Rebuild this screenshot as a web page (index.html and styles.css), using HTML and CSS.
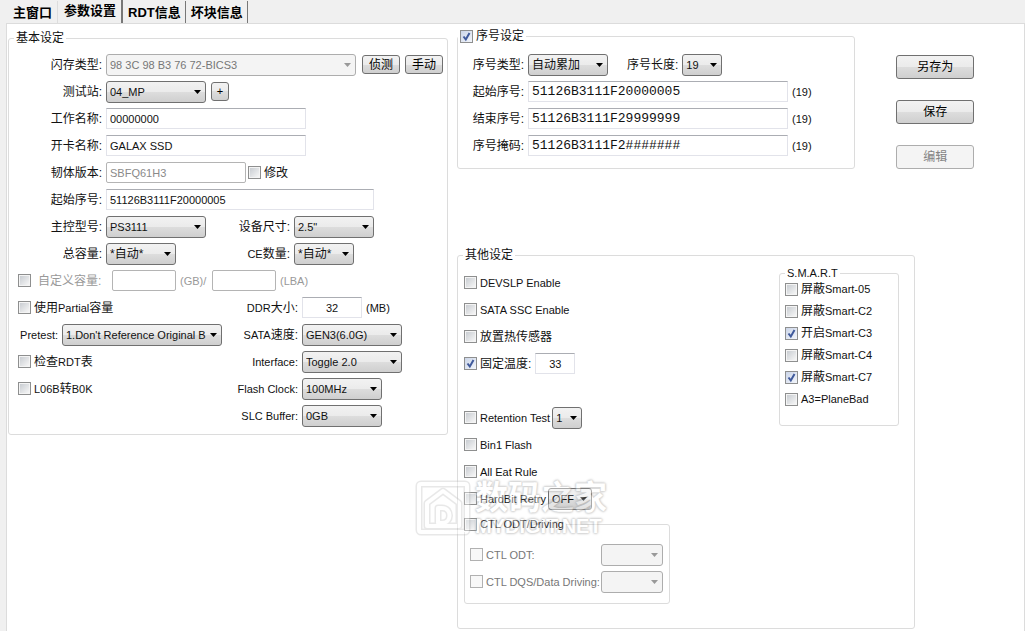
FILE: index.html
```html
<!DOCTYPE html>
<html lang="zh-CN">
<head>
<meta charset="utf-8">
<title>参数设置</title>
<link rel="stylesheet" href="styles.css">
</head>
<body>
<nav class="tabs" role="tablist">
  <button class="tab" role="tab" type="button">主窗口</button>
  <button class="tab tab-active" role="tab" type="button" aria-selected="true">参数设置</button>
  <button class="tab" role="tab" type="button">RDT信息</button>
  <button class="tab" role="tab" type="button">坏块信息</button>
</nav>
<main class="panel">
  <fieldset class="group basic">
    <legend class="zh">基本设定</legend>
    <div class="row"><label class="name zh" for="flash">闪存类型:</label>
      <select class="w250" id="flash" disabled><option>98 3C 98 B3 76 72-BICS3</option></select>
      <button class="btn btn-small after" type="button">侦测</button><button class="btn btn-small after" type="button">手动</button></div>
    <div class="row"><label class="name zh" for="station">测试站:</label>
      <select class="w100" id="station"><option>04_MP</option></select>
      <button class="btn btn-plus" type="button">+</button></div>
    <div class="row"><label class="name zh" for="work">工作名称:</label><input class="w200" id="work" type="text" value="00000000"></div>
    <div class="row"><label class="name zh" for="card">开卡名称:</label><input class="w200" id="card" type="text" value="GALAX SSD"></div>
    <div class="row"><label class="name zh" for="fw">韧体版本:</label><input class="w140" id="fw" type="text" value="SBFQ61H3" disabled>
      <label class="check zh fix"><input type="checkbox">修改</label></div>
    <div class="row"><label class="name zh" for="start">起始序号:</label><input class="w268" id="start" type="text" value="51126B3111F20000005"></div>
    <div class="row row-four"><label class="name zh" for="ctrl">主控型号:</label>
      <select class="w100" id="ctrl"><option>PS3111</option></select>
      <label class="name zh" for="size">设备尺寸:</label>
      <select class="w80" id="size"><option>2.5"</option></select></div>
    <div class="row row-four"><label class="name zh" for="cap">总容量:</label>
      <select class="w70 zh" id="cap"><option>*自动*</option></select>
      <label class="name" for="ce">CE<span class="zh">数量:</span></label>
      <select class="w60 zh" id="ce"><option>*自动*</option></select></div>
    <div class="row row-custom">
      <input type="checkbox" id="custom" disabled><label class="zh custom-name" for="custom">自定义容量:</label>
      <input class="w64" type="text" aria-label="GB" disabled><span class="unit">(GB)/</span>
      <input class="w64" type="text" aria-label="LBA" disabled><span class="unit">(LBA)</span></div>
    <div class="row row-pair"><label class="check indent"><input type="checkbox"><span><span class="zh">使用</span>Partial<span class="zh">容量</span></span></label>
      <label class="name" for="ddr">DDR<span class="zh">大小:</span></label>
      <div class="field"><input class="w60 center" id="ddr" type="text" value="32">(MB)</div></div>
    <div class="row row-pair"><div class="field field-end"><label for="pretest">Pretest:</label>
      <select class="w160" id="pretest"><option>1.Don't Reference Original B</option></select></div>
      <label class="name" for="sata">SATA<span class="zh">速度:</span></label>
      <select class="w100" id="sata"><option>GEN3(6.0G)</option></select></div>
    <div class="row row-pair"><label class="check indent"><input type="checkbox"><span><span class="zh">检查</span>RDT<span class="zh">表</span></span></label>
      <label class="name" for="iface">Interface:</label>
      <select class="w100" id="iface"><option>Toggle 2.0</option></select></div>
    <div class="row row-pair"><label class="check indent"><input type="checkbox"><span>L06B<span class="zh">转</span>B0K</span></label>
      <label class="name" for="clock">Flash Clock:</label>
      <select class="w80" id="clock"><option>100MHz</option></select></div>
    <div class="row row-pair"><span></span>
      <label class="name" for="slc">SLC Buffer:</label>
      <select class="w80" id="slc"><option>0GB</option></select></div>
  </fieldset>

  <div class="right">
    <div class="upper">
      <fieldset class="group serial">
        <legend class="legend-check"><label class="check zh"><input type="checkbox" checked>序号设定</label></legend>
        <div class="row"><label class="name zh" for="stype">序号类型:</label>
          <select class="w80 zh" id="stype"><option>自动累加</option></select>
          <label class="zh length-name" for="slen">序号长度:</label>
          <select class="w40" id="slen"><option>19</option></select></div>
        <div class="row"><label class="name zh" for="s1">起始序号:</label><input class="w260 mono" id="s1" type="text" value="51126B3111F20000005"><span>(19)</span></div>
        <div class="row"><label class="name zh" for="s2">结束序号:</label><input class="w260 mono" id="s2" type="text" value="51126B3111F29999999"><span>(19)</span></div>
        <div class="row"><label class="name zh" for="s3">序号掩码:</label><input class="w260 mono" id="s3" type="text" value="51126B3111F2#######"><span>(19)</span></div>
      </fieldset>
      <div class="actions">
        <button class="btn btn-large" type="button">另存为</button>
        <button class="btn btn-large" type="button">保存</button>
        <button class="btn btn-large" type="button" disabled>编辑</button>
      </div>
    </div>

    <fieldset class="group other">
      <legend class="zh">其他设定</legend>
      <div class="other-body">
        <div class="options">
          <div class="row"><label class="check"><input type="checkbox">DEVSLP Enable</label></div>
          <div class="row"><label class="check"><input type="checkbox">SATA SSC Enable</label></div>
          <div class="row"><label class="check zh"><input type="checkbox">放置热传感器</label></div>
          <div class="row"><label class="check zh"><input type="checkbox" checked>固定温度:</label><input class="w40 center" type="text" value="33" aria-label="固定温度"></div>
          <div class="row row-break"><label class="check"><input type="checkbox">Retention Test</label>
            <select class="w30 close" aria-label="Retention Test"><option>1</option></select></div>
          <div class="row"><label class="check"><input type="checkbox">Bin1 Flash</label></div>
          <div class="row"><label class="check"><input type="checkbox">All Eat Rule</label></div>
          <div class="row"><label class="check"><input type="checkbox">HardBit Retry</label>
            <select class="w44 close" aria-label="HardBit Retry"><option>OFF</option></select></div>
          <fieldset class="group ctl">
            <legend class="legend-check"><label class="check"><input type="checkbox">CTL ODT/Driving</label></legend>
            <div class="row"><label class="check muted"><input type="checkbox" disabled>CTL ODT:</label>
              <select class="w62" aria-label="CTL ODT" disabled><option></option></select></div>
            <div class="row"><label class="check muted"><input type="checkbox" disabled>CTL DQS/Data Driving:</label>
              <select class="w62" aria-label="CTL DQS/Data Driving" disabled><option></option></select></div>
          </fieldset>
        </div>
        <fieldset class="group smart">
          <legend>S.M.A.R.T</legend>
          <div class="smart-list">
            <label class="check"><input type="checkbox"><span><span class="zh">屏蔽</span>Smart-05</span></label>
            <label class="check"><input type="checkbox"><span><span class="zh">屏蔽</span>Smart-C2</span></label>
            <label class="check"><input type="checkbox" checked><span><span class="zh">开启</span>Smart-C3</span></label>
            <label class="check"><input type="checkbox"><span><span class="zh">屏蔽</span>Smart-C4</span></label>
            <label class="check"><input type="checkbox" checked><span><span class="zh">屏蔽</span>Smart-C7</span></label>
            <label class="check"><input type="checkbox">A3=PlaneBad</label>
          </div>
        </fieldset>
      </div>
      <div class="watermark">
        <svg width="56" height="56" viewBox="0 0 56 56" fill="none" stroke-linejoin="round">
          <g stroke="#c8c8c8" stroke-width="7">
            <rect x="4" y="4" width="48" height="48" rx="2"/>
            <path d="M12 46V23L28 11l16 12v23z"/>
            <path d="M23 28h4c10 0 10 15 0 15h-4z"/>
          </g>
          <g stroke="#fff" stroke-width="4">
            <rect x="4" y="4" width="48" height="48" rx="2"/>
            <path d="M12 46V23L28 11l16 12v23z"/>
            <path d="M23 28h4c10 0 10 15 0 15h-4z"/>
          </g>
        </svg>
        <div class="brand"><span class="brand-zh">数码之家</span><span class="brand-en">MYDIGIT.NET</span></div>
      </div>
    </fieldset>
  </div>
</main>
</body>
</html>
```
FILE: styles.css
```css
* { box-sizing: border-box; }

body {
  margin: 0;
  min-height: 100vh;
  display: flex;
  flex-direction: column;
  padding-left: 6px;
  background: #f0f0f0;
  color: #111;
  font: 11px/16px "Liberation Sans", "Noto Sans CJK SC", sans-serif;
  white-space: nowrap;
}

button, input, select { font: inherit; color: inherit; margin: 0; }
.zh { font-size: 12px; }

/* Tab strip */
.tabs { display: flex; height: 23px; align-items: flex-end; }
.tab {
  height: 22px;
  padding: 1px 4px 0 5px;
  border: 0;
  border-right: 1px solid #777;
  background: #f0f0f0;
  color: #000;
  font-size: 13px;
  font-weight: bold;
}
.tab:first-child { padding: 1px 5px 0 7px; border-right-color: #ddd; }
.tab-active {
  height: 23px;
  padding: 0 5px 1px 6px;
  border-right: 2px solid #777;
}

/* Page panel */
.panel {
  flex: 1;
  display: grid;
  grid-template-columns: minmax(440px, 440fr) minmax(518px, 568fr);
  gap: 9px;
  align-items: start;
  padding: 4px 0 2px 1px;
  border: 1px solid #dcdcdc;
  border-bottom: 0;
  background: #fff;
}

.group {
  min-width: 0;
  margin: 0;
  padding: 0;
  border: 1px solid #dcdcdc;
  border-radius: 3px;
}
legend { height: 16px; margin-left: 5px; padding: 0 2px; }
.legend-check { margin-left: 0; }

.row { display: flex; align-items: center; gap: 4px; height: 27px; }
.name { text-align: right; }
.row > .name:first-child { flex: 0 0 auto; }

.basic { margin-top: 2px; padding: 5px 0; }
.basic .row > .name:first-child { width: 93px; }
.after { margin-left: 2px; }
.fix { margin-left: -2px; }
.basic .row-four { display: grid; grid-template-columns: 93px 100px 80px auto; }
.basic .row-pair { display: grid; grid-template-columns: 213px 72px auto; }
.row-four, .row-pair { justify-content: start; }
.indent { padding-left: 9px; }
.field { display: flex; align-items: center; gap: 4px; }
.field-end { justify-content: flex-end; }
.row-custom { padding-left: 9px; color: #999; }
.custom-name { width: 73px; padding-left: 3px; }
.unit { width: 28px; }

/* Text boxes */
input[type="text"] {
  height: 21px;
  padding: 0 3px;
  border: 1px solid #e2e3ea;
  border-top-color: #abadb3;
  background: #fff;
}
input[type="text"]:disabled { border-color: #b4b4b4; border-radius: 2px; color: #8a8a8a; }
input.center { text-align: center; }
input.mono { font: 13px/16px "Liberation Mono", monospace; }

/* Drop-downs */
select {
  appearance: none;
  flex: none;
  height: 22px;
  padding: 0 14px 0 3px;
  border: 1px solid #707070;
  border-radius: 3px;
  background:
    url("data:image/svg+xml,%3Csvg xmlns='http://www.w3.org/2000/svg' width='7' height='4'%3E%3Cpath d='M0 0h7L3.5 4z' fill='%23000'/%3E%3C/svg%3E") no-repeat right 4px center,
    linear-gradient(#f2f2f2, #ebebeb 50%, #dddddd 50%, #cfcfcf);
}
select:disabled {
  border-color: #adadad;
  background:
    url("data:image/svg+xml,%3Csvg xmlns='http://www.w3.org/2000/svg' width='7' height='4'%3E%3Cpath d='M0 0h7L3.5 4z' fill='%23999'/%3E%3C/svg%3E") no-repeat right 4px center,
    #f4f4f4;
  color: #777;
  opacity: 1;
}

/* Tick boxes */
.check { display: inline-flex; align-items: center; gap: 3px; }
input[type="checkbox"] {
  appearance: none;
  flex: none;
  width: 13px;
  height: 13px;
  border: 1px solid #8e8f8f;
  background: linear-gradient(135deg, #c9cdd2, #f6f6f6) content-box, #f4f4f4;
  padding: 1px;
}
input[type="checkbox"]:checked {
  background:
    url("data:image/svg+xml,%3Csvg xmlns='http://www.w3.org/2000/svg' width='11' height='11'%3E%3Cpath d='M2.5 5.5l2.3 3L8.5 2' fill='none' stroke='%23405a9c' stroke-width='2'/%3E%3C/svg%3E") no-repeat center / 11px border-box,
    linear-gradient(135deg, #cbd5e8, #f3f6fb);
}
input[type="checkbox"]:disabled { border-color: #b1b1b1; background: #f8f8f8; }
#custom { border-color: #8e8f8f; background: linear-gradient(135deg, #c9cdd2, #f6f6f6) content-box, #f4f4f4; }
.muted { color: #777; }

/* Buttons */
.btn {
  padding: 0;
  border: 1px solid #707070;
  border-radius: 3px;
  background: linear-gradient(#f2f2f2, #ebebeb 50%, #dddddd 50%, #cfcfcf);
  color: #000;
  font-size: 12px;
}
.btn:disabled { border-color: #adadad; background: #f4f4f4; color: #838383; }
.btn-small { width: 38px; height: 19px; }
.after + .after { margin-left: 1px; }
.btn-plus { width: 18px; height: 19px; margin-left: 1px; font-size: 11px; line-height: 11px; }
.btn-large { width: 78px; height: 24px; }

/* Right side */
.upper { display: grid; grid-template-columns: minmax(390px, 399fr) minmax(119px, 169fr); }
.serial { padding: 7px 0 9px; }
.serial .row > .name:first-child { width: 66px; }
.length-name { margin-left: 15px; }
.actions { display: flex; flex-direction: column; gap: 21px; padding: 27px 0 0 41px; }

.other { position: relative; margin: 78px 109px 0 0; padding: 2px 0 24px; }
.other-body { display: flex; justify-content: space-between; align-items: flex-start; padding: 0 15px 0 6px; }
.options { padding-top: 4px; }
.row-break { margin-top: 27px; }
.close { margin-left: -2px; }
.ctl { width: 206px; margin-top: 4px; padding: 9px 6px 8px 5px; }
.ctl .legend-check { margin-left: -6px; padding-left: 0; }
.ctl .row { justify-content: space-between; gap: 0; }
.smart { width: 120px; padding-bottom: 15px; }
.smart-list { display: flex; flex-direction: column; margin-top: -3px; padding-left: 5px; }
.smart-list .check { height: 22px; }

/* Watermark laid over the group */
.watermark {
  position: absolute;
  left: -43px;
  top: 217px;
  display: flex;
  gap: 4px;
  opacity: 0.4;
  pointer-events: none;
}
.brand {
  display: flex;
  flex-direction: column;
  color: #fff;
  font-weight: bold;
  text-shadow: 1px 0 2px #999, -1px 0 2px #999, 0 1px 2px #999, 0 -1px 2px #999;
}
.brand-zh { font-size: 33px; line-height: 36px; }
.brand-en { font-size: 20px; line-height: 20px; }

/* Control widths */
.w30 { width: 30px; }
.w40 { width: 40px; }
.w44 { width: 44px; }
.w60 { width: 60px; }
.w62 { width: 62px; }
.w64 { width: 64px; }
.w70 { width: 70px; }
.w80 { width: 80px; }
.w100 { width: 100px; }
.w140 { width: 140px; }
.w160 { width: 160px; }
.w200 { width: 200px; }
.w250 { width: 250px; }
.w260 { width: 260px; }
.w268 { width: 268px; }
```
